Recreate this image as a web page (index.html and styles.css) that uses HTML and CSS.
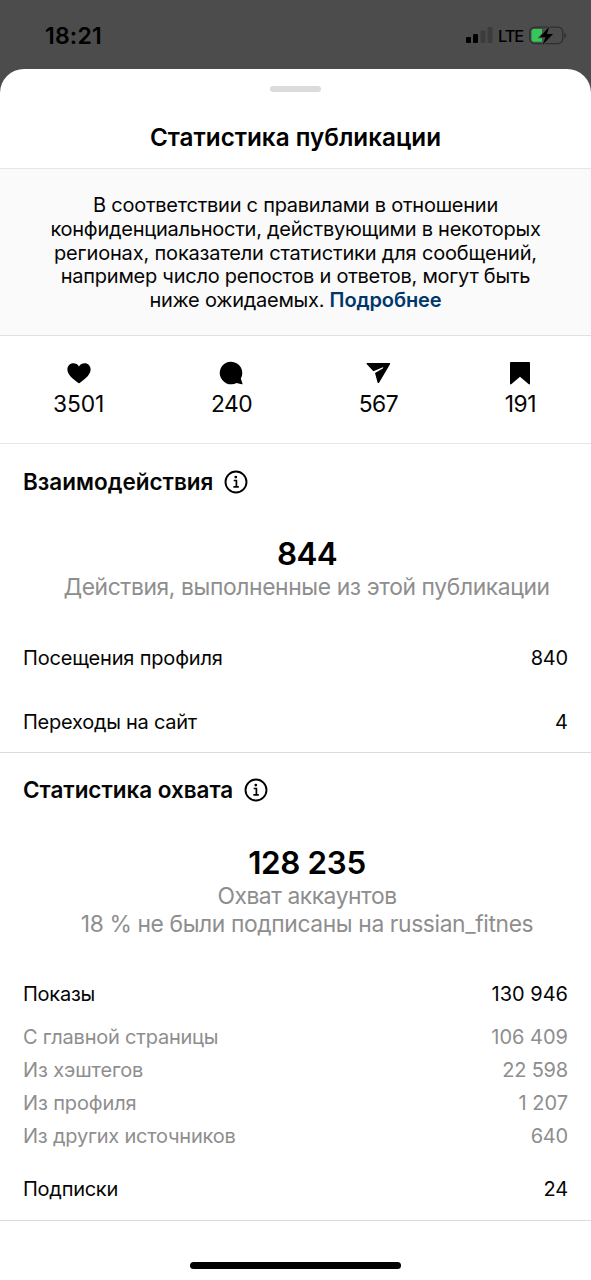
FILE: index.html
```html
<!DOCTYPE html>
<html lang="ru">
<head>
<meta charset="utf-8">
<title>Статистика публикации</title>
<link rel="stylesheet" href="styles.css">
</head>
<body>
<div class="screen">
  <header class="status">
    <span class="clock">18:21</span>
    <div class="status-right">
      <svg class="signal" width="27" height="18" viewBox="0 0 27 18">
        <rect x="0" y="11" width="5" height="6" rx="1"/>
        <rect x="7" y="8" width="5" height="9" rx="1"/>
        <rect x="14.500" y="4.500" width="5" height="12.500" rx="1" fill="#3c3c3c"/>
        <rect x="21.500" y="1" width="5" height="16" rx="1" fill="#3c3c3c"/>
      </svg>
      <span class="network">LTE</span>
      <svg class="battery" width="38" height="20" viewBox="0 0 38 20">
        <rect x="0.800" y="1.100" width="33" height="16.500" rx="5" fill="none" stroke="#2f2f2f" stroke-width="1.300"/>
        <path d="M35.300 6.700c2.300.8 2.300 4.600 0 5.400z" fill="#2f2f2f"/>
        <path d="M5 3h8v12.700H5a2.500 2.500 0 0 1-2.500-2.500V5.500A2.500 2.500 0 0 1 5 3z" fill="#35c759"/>
        <path d="M20.300.4 10.800 11.200h5.700L13.500 19 24 8h-6z" fill="#000" stroke="#4c4c4c" stroke-width="2" paint-order="stroke"/>
      </svg>
    </div>
  </header>

  <main class="sheet">
    <div class="grabber"></div>
    <h1 class="title">Статистика публикации</h1>

    <p class="notice">
      <span class="n1">В соответствии с правилами в отношении</span><br>
      <span class="n2">конфиденциальности, действующими в некоторых</span><br>
      <span class="n3">регионах, показатели статистики для сообщений,</span><br>
      <span class="n4">например число репостов и ответов, могут быть</span><br>
      <span class="n5">ниже ожидаемых. <a class="more">Подробнее</a></span>
    </p>

    <section class="counts">
      <div class="count likes">
        <svg width="24" height="24" viewBox="0 0 24 24"><path d="M12 22.200c-.5 0-.9-.2-1.300-.6C5.500 17.300.4 13.500.4 8.400.4 4.900 3 2.300 6.300 2.300c2.400 0 4.500 1.200 5.700 3.200 1.200-2 3.300-3.200 5.700-3.200 3.300 0 5.900 2.600 5.900 6.100 0 5.100-5.100 8.900-10.300 13.200-.4.400-.8.600-1.300.6z"/></svg>
        <span>3501</span>
      </div>
      <div class="count">
        <svg width="24" height="24" viewBox="0 0 24 24"><path d="M12 .7a11.300 11.300 0 1 0 5.500 21.200l5.200 1.300c.6.100.9-.3.7-.9l-1.600-4.700A11.300 11.300 0 0 0 12 .7z"/></svg>
        <span>240</span>
      </div>
      <div class="count">
        <svg width="24" height="24" viewBox="0 0 24 24"><path d="M1.300 2h22c.8 0 1.100.6.7 1.300L13.200 21.500c-.5.900-1.500.7-1.700-.3L9 11.900 16.800 7.500c.9-.6.4-1.500-.5-1.100L7.400 10.200.8 3.300C.3 2.700.5 2 1.300 2z"/></svg>
        <span>567</span>
      </div>
      <div class="count">
        <svg width="24" height="24" viewBox="0 0 24 24"><path d="M3 1h18c.5 0 1 .4 1 1v20.500c0 .9-.8 1.200-1.500.6L12 15.800l-8.500 7.300c-.7.600-1.500.3-1.500-.6V2c0-.6.500-1 1-1z"/></svg>
        <span>191</span>
      </div>
    </section>

    <section class="block">
      <h2 class="heading"><span class="h-a">Взаимодействия</span>
        <svg class="info" width="24" height="24" viewBox="0 0 24 24"><circle cx="12" cy="12" r="10.500" fill="none" stroke="#000" stroke-width="1.900"/><circle cx="11.800" cy="7.100" r="1.400"/><path d="M9.700 10.500h2.700v6.200M9.400 16.800h5.400" fill="none" stroke="#000" stroke-width="1.700"/></svg>
      </h2>
      <div class="total">844</div>
      <div class="caption cap-a">Действия, выполненные из этой публикации</div>
      <div class="row first"><span class="r1">Посещения профиля</span><span class="num">840</span></div>
      <div class="row"><span class="r2">Переходы на сайт</span><span>4</span></div>
    </section>

    <section class="block reach">
      <h2 class="heading"><span class="h-b">Статистика охвата</span>
        <svg class="info" width="24" height="24" viewBox="0 0 24 24"><circle cx="12" cy="12" r="10.500" fill="none" stroke="#000" stroke-width="1.900"/><circle cx="11.800" cy="7.100" r="1.400"/><path d="M9.700 10.500h2.700v6.200M9.400 16.800h5.400" fill="none" stroke="#000" stroke-width="1.700"/></svg>
      </h2>
      <div class="total big">128 235</div>
      <div class="caption cap-b">Охват аккаунтов</div>
      <div class="caption cap-c">18 % не были подписаны на russian_fitnes</div>
      <div class="row shows"><span class="r3">Показы</span><span>130 946</span></div>
      <div class="sources">
        <div class="source"><span class="s1">С главной страницы</span><span>106 409</span></div>
        <div class="source"><span class="s2">Из хэштегов</span><span class="num">22 598</span></div>
        <div class="source"><span class="s3">Из профиля</span><span>1 207</span></div>
        <div class="source"><span class="s4">Из других источников</span><span class="num">640</span></div>
      </div>
      <div class="row follows"><span class="r4">Подписки</span><span class="num">24</span></div>
    </section>

    <footer class="home"><div class="home-bar"></div></footer>
  </main>
</div>
</body>
</html>
```
FILE: styles.css
```css
* { box-sizing: border-box; }
body {
  margin: 0;
  background: #4c4c4c;
  color: #050505;
  font-family: Inter, "Liberation Sans", sans-serif;
  font-size: 20px;
}
svg { display: block; flex: none; }
h1, h2, p { margin: 0; }
.screen { width: 591px; height: 1280px; overflow: hidden; display: flex; flex-direction: column; background: #4c4c4c; }

/* Status bar */
.status { height: 69px; flex: none; display: flex; justify-content: space-between; padding: 0 24px 0 45px; }
.clock { font-size: 23px; font-weight: 600; line-height: 28px; padding-top: 22px; letter-spacing: 0.200px; color: #000; }
.status-right { display: flex; padding-top: 26px; color: #000; }
.network { font-size: 16.500px; font-weight: 500; line-height: 20px; margin-left: 5px; width: 31px; letter-spacing: -1.100px; white-space: nowrap; }

/* Sheet */
.sheet { flex: 1; display: flex; flex-direction: column; background: #fff; border-radius: 24px 24px 0 0; }
.grabber { width: 51px; height: 6px; margin: 17px auto 0; border-radius: 3px; background: #dbdbdb; flex: none; }
.title { height: 76px; padding-top: 31px; text-align: center; font-size: 24.250px; line-height: 30px; font-weight: 600; color: #000; }
.notice { height: 168px; padding-top: 25px; border-top: 1px solid #e6e6e6; border-bottom: 1px solid #e0e0e0; background: #fafafa; text-align: center; line-height: 23.800px; white-space: nowrap; }
.n1, .n2, .n4, .n5 { letter-spacing: -0.250px; }
.n3 { letter-spacing: -0.170px; }
.more { color: #00376b; font-weight: 600; letter-spacing: -0.100px; }

/* Counters */
.counts { height: 108px; display: flex; justify-content: space-between; padding: 25px 55px 0 53px; border-bottom: 1px solid #e6e6e6; font-size: 22.800px; line-height: 28px; letter-spacing: -0.500px; }
.count { display: flex; flex-direction: column; align-items: center; gap: 5px; }
.likes { letter-spacing: -0.100px; }

/* Sections */
.block { height: 309px; padding: 0 23px; border-bottom: 1px solid #dcdcdc; }
.reach { height: 468px; }
.heading { display: flex; align-items: center; gap: 11px; height: 28px; margin-top: 24px; font-size: 22.500px; font-weight: 600; line-height: 28px; white-space: nowrap; }
.reach .heading { margin-top: 23px; }
.h-b { letter-spacing: -0.040px; }
.total { margin-top: 40px; padding-left: 23px; height: 36px; text-align: center; font-size: 31.400px; font-weight: 600; line-height: 36px; letter-spacing: -0.600px; color: #000; }
.big { margin-top: 41px; letter-spacing: -0.350px; }
.caption { height: 28px; text-align: center; font-size: 22.800px; line-height: 28px; color: #8e8e8e; white-space: nowrap; letter-spacing: -0.370px; padding-left: 23px; }
.cap-a { margin-top: 1px; padding-left: 22px; }
.cap-b { margin-top: 1px; letter-spacing: -0.430px; }
.row, .source { display: flex; justify-content: space-between; white-space: nowrap; }
.row { height: 28px; line-height: 28px; margin-top: 36px; }
.first { margin-top: 43px; }
.shows { margin-top: 42px; }
.num { letter-spacing: -0.200px; }
.r1 { letter-spacing: -0.180px; }
.r2, .r3, .r4 { letter-spacing: -0.260px; }
.s1, .s4 { letter-spacing: -0.220px; }
.s2, .s3 { letter-spacing: -0.120px; }
.sources { display: grid; grid-auto-rows: 33px; margin-top: 13px; color: #8e8e8e; line-height: 33px; }
.follows { margin-top: 22px; }

/* Home indicator */
.home { flex: 1; display: flex; justify-content: center; padding-top: 41px; }
.home-bar { width: 211px; height: 7px; border-radius: 4px; background: #000; }
```
